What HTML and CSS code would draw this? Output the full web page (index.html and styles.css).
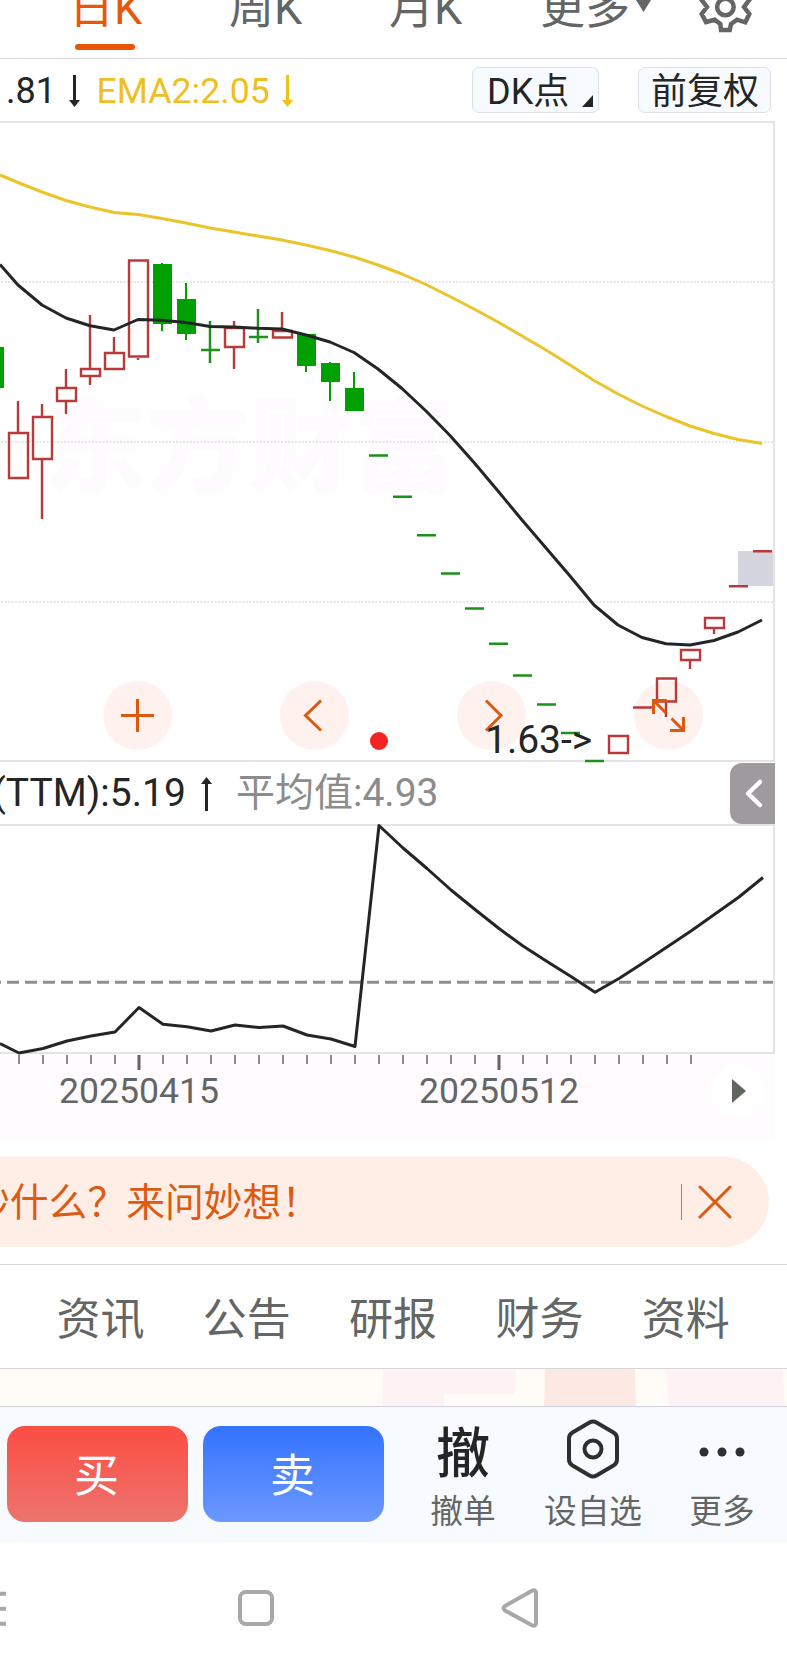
FILE: index.html
```html
<!DOCTYPE html>
<html lang="zh-CN">
<head>
<meta charset="utf-8">
<title>日K</title>
<link rel="stylesheet" href="styles.css">
</head>
<body>
<div class="screen">
  <nav class="period-tabs">
    <span class="period active">日K</span>
    <span class="period">周K</span>
    <span class="period">月K</span>
    <span class="period more">更多<svg class="caret" viewBox="0 0 15 12"><path d="M0 0H15L7.500 12Z"/></svg></span>
    <svg class="gear" viewBox="697 -22 57 58"><path d="M707 7L701.700 14L706 22L714.700 19.700L720.300 24L721 30H729.700L731 24L737 19.700L745.300 22.300L749.300 14L744 7L749.300 0L745.300 -8L737 -5.700L731 -10L729.700 -16H721L720.300 -10L714.700 -5.700L706 -8L701.700 0Z"/><circle cx="725.400" cy="7" r="8.300"/></svg>
  </nav>

  <div class="indicator main-indicator">
    <span class="dark">.81</span>
    <svg class="arrow down" viewBox="0 0 11 32"><path d="M4 0H7V25H11L5.500 32L0 25H4Z"/></svg>
    <span class="yellow">EMA2:2.05</span>
    <svg class="arrow down yellow" viewBox="0 0 11 32"><path d="M4 0H7V25H11L5.500 32L0 25H4Z"/></svg>
    <button class="chip dk">DK点<svg class="corner" viewBox="0 0 11 12"><path d="M11 0V12H0Z"/></svg></button>
    <button class="chip adjust">前复权</button>
  </div>

  <svg class="chart kline" viewBox="0 121 787 642">
    <text class="watermark" x="43" y="484">东方财富</text>
    <g class="frame"><path d="M0 122H774V761H0"/></g>
    <g class="grid"><path d="M1 282H773M1 442H773M1 602H773"/></g>
    <rect class="gap" x="738" y="551" width="35" height="35"/>
    <g class="bubble">
      <circle cx="137.500" cy="715.500" r="34.500"/><circle cx="314.500" cy="715.500" r="34.500"/>
      <circle cx="491.500" cy="715.500" r="34.500"/><circle cx="668.500" cy="715.500" r="34.500"/>
    </g>
    <g class="down-candle">
      <rect x="-15" y="347" width="19" height="41"/>
      <rect x="153" y="264" width="19" height="60"/><rect x="161" y="263" width="2" height="68"/>
      <rect x="177" y="299" width="19" height="35"/><rect x="185" y="283" width="2" height="57"/>
      <rect x="297" y="334" width="19" height="32"/><rect x="305" y="334" width="2" height="38"/>
      <rect x="321" y="363" width="19" height="19"/><rect x="329" y="362" width="2" height="39"/>
      <rect x="345" y="388" width="19" height="23"/><rect x="353" y="372" width="2" height="39"/>
    </g>
    <g class="down-flat">
      <path d="M201 350H220M210 321V363M249 337H268M258 309V343"/>
      <path d="M369 455.500H388M393 496.700H412M417 535.300H436M441 573.500H460M465 608.500H484M489 643.700H508M513 675.500H532M537 704.500H556M561 733H580M585 761H604"/>
    </g>
    <g class="up-candle">
      <path d="M18 401V432M9 433H28V478H9Z"/>
      <path d="M42 404V416M42 460V519M33 417H52V459H33Z"/>
      <path d="M66 369V387M66 402V414M57 388H76V401H57Z"/>
      <path d="M90 315V368M90 377V385M81 369H100V376H81Z"/>
      <path d="M114 337V352M105 353H124V369H105Z"/>
      <path d="M138 358V360M129 260.500H148V356.500H129Z"/>
      <path d="M234 321V327M234 348V369M225 328H244V347H225Z"/>
      <path d="M282 312V329M273 331H292V337.500H273Z"/>
      <path d="M609 736H628V753H609ZM633 707.500H652"/>
      <path d="M657 678.500H676V701.500H657ZM666 702V717"/>
      <path d="M681 650H700V660H681ZM690 661V669"/>
      <path d="M705 618H724V628H705ZM714 629V634"/>
      <path d="M729 586.300H748M753 551.300H772"/>
    </g>
    <polyline class="ema slow" points="0,175 18,182.500 42,192 66,200.500 90,207 114,212.500 138,214.500 162,218.500 186,223 210,228 234,232 258,236 282,240 306,245 330,250.500 354,257 378,265 402,274 426,284.500 450,296.500 474,309 498,322 522,336 546,350 570,365 594,380.500 618,394 642,406 666,416.500 690,426 714,433.500 738,439.500 762,443.500"/>
    <polyline class="ema fast" points="0,264.500 18,285 42,305 66,318 90,325.700 114,330 138,319.500 162,320.300 186,322.500 210,326.500 234,327 258,328.300 282,329 306,335 330,342 354,352.500 378,369 402,388.500 426,411 450,435.500 474,462.500 498,491 522,520 546,548 570,576 594,605 618,625 642,637.500 666,643.700 690,645 714,640.500 738,632 762,620"/>
    <g class="bubble-icon">
      <path d="M121 715.500H154M137.500 699V732"/>
      <path d="M321 700.500L305.500 715.500L321 730.500M486 700.500L501 715.500L486 730.500"/>
      <path d="M667 700.500H653.500V714M654 701L666 713M670 730.500H683.500V717M683 730L671.500 718.500"/>
    </g>
    <circle class="marker" cx="379" cy="741" r="9"/>
    <text class="low-label" x="485" y="753">1.63-&gt;</text>
  </svg>

  <div class="indicator sub-indicator">
    <span class="dark">(TTM):5.19</span>
    <svg class="arrow up" viewBox="0 0 11 34"><path d="M4 34H7V7H11L5.500 0L0 7H4Z"/></svg>
    <span class="gray">平均值:4.93</span>
    <button class="drawer"><svg viewBox="0 0 45 61"><path d="M30 19L18 30.500L30 42"/></svg></button>
  </div>

  <svg class="chart valuation" viewBox="0 824 787 231">
    <g class="frame"><path d="M0 825H774V1053H0"/></g>
    <path class="average" d="M-11 982.300H773"/>
    <polyline class="ema fast" points="0,1043.500 19,1053 43,1048.500 67,1041 91,1036 115,1032 139,1007.500 163,1024.300 187,1026.700 211,1031 235,1025 259,1027.500 283,1026 307,1035 331,1039 355,1046.500 379,825.500 403,848 427,868.500 451,890 475,909.500 499,928.500 523,946 547,961.500 571,976.500 595,992.300 619,978.500 643,963 667,947 691,931 715,914 739,897 763,877.500"/>
  </svg>

  <div class="axis">
    <svg class="ticks" viewBox="0 1055 775 16">
      <path class="minor" d="M19 1055v9m24-9v9m24-9v9m24-9v9m24-9v9m48-9v9m24-9v9m24-9v9m24-9v9m24-9v9m24-9v9m24-9v9m24-9v9m24-9v9m24-9v9m24-9v9m24-9v9m24-9v9m24-9v9m48-9v9m24-9v9m24-9v9m24-9v9m24-9v9m24-9v9m24-9v9m24-9v9"/>
      <path class="major" d="M139 1055V1070M499 1055V1070"/>
    </svg>
    <div class="dates"><span>20250415</span><span>20250512</span></div>
    <button class="play"><svg viewBox="0 0 14 24"><path d="M0 0L14 12L0 24Z"/></svg></button>
  </div>

  <div class="banner">
    <span class="ask">妙什么？来问妙想！</span>
    <span class="rule"></span>
    <svg class="close" viewBox="0 0 34 34"><path d="M2 2L32 32M32 2L2 32"/></svg>
  </div>

  <nav class="sections"><span>资讯</span><span>公告</span><span>研报</span><span>财务</span><span>资料</span></nav>

  <svg class="promo" viewBox="0 0 787 37">
    <path class="pink" d="M383 0H516L514 25H444V37H382Z"/>
    <path class="peach" d="M545 0H635L636 37H544Z"/>
    <path class="pink" d="M666 0H783L785 37H669Z"/>
  </svg>

  <div class="trade-bar">
    <button class="trade buy">买</button>
    <button class="trade sell">卖</button>
    <div class="action cancel"><span class="glyph">撤</span><span class="label">撤单</span></div>
    <div class="action favorite">
      <svg class="icon" viewBox="0 0 60 62"><path d="M26.500 4.500Q30 2.500 33.500 4.500L50.500 14.500Q54 16.500 54 20.500V41.500Q54 45.500 50.500 47.500L33.500 57.500Q30 59.500 26.500 57.500L9.500 47.500Q6 45.500 6 41.500V20.500Q6 16.500 9.500 14.500Z"/><circle cx="30" cy="31" r="8.500"/></svg>
      <span class="label">设自选</span>
    </div>
    <div class="action overflow">
      <svg class="icon dots" viewBox="0 0 60 62"><circle cx="12" cy="34" r="4.500"/><circle cx="30" cy="34" r="4.500"/><circle cx="48" cy="34" r="4.500"/></svg>
      <span class="label">更多</span>
    </div>
  </div>

  <svg class="system-nav" viewBox="0 1542 787 131">
    <path d="M-10 1593.700H6M-10 1608.700H6M-10 1623.700H6"/>
    <rect x="240" y="1592" width="32" height="32" rx="6"/>
    <path d="M505 1606L531.500 1591Q536 1589 536 1593V1623Q536 1627 531.500 1625L505 1610.500Q502 1608.300 505 1606Z"/>
  </svg>
</div>
</body>
</html>
```
FILE: styles.css
```css
* { box-sizing: border-box; }
body { margin: 0; background: #fff; }
svg { display: block; flex: none; }
button { border: 0; padding: 0; margin: 0; font: inherit; color: inherit; }
.screen {
  width: 787px;
  height: 1674px;
  overflow: hidden;
  font-family: Roboto, "Noto Sans CJK SC", sans-serif;
  font-weight: 400;
  color: #242625;
  white-space: nowrap;
}

.period-tabs {
  display: flex;
  height: 59px;
  padding-left: 69px;
  border-bottom: 1px solid #d6d6d8;
  font-size: 45px;
  line-height: 50px;
  color: #646665;
}
.period { height: 66px; margin-top: -16px; width: 160px; flex: none; }
.period.active { color: #e8560a; }
.period.active::after {
  content: "";
  display: block;
  width: 60px;
  height: 6px;
  margin: 10px 0 0 6px;
  border-radius: 3px;
  background: #e8560a;
}
.period.more { display: flex; width: 157px; margin-left: -9px; }
.caret { width: 15px; height: 12px; margin: 16px 0 0 6px; fill: #646665; }
.gear { width: 57px; height: 58px; margin-top: -22px; fill: none; stroke: #646665; stroke-width: 4.5; }

.indicator { display: flex; align-items: center; height: 62px; }
.main-indicator { padding-left: 6px; font-size: 36px; line-height: 62px; }
.main-indicator span { padding-top: 1px; }
.main-indicator .dark { width: 63px; }
.arrow { width: 11px; fill: #242625; }
.arrow.down { height: 32px; margin-top: 2px; }
.arrow.up { height: 34px; }
.yellow { color: #eebf1e; fill: #f2c118; }
.main-indicator span.yellow { width: 185.500px; margin-left: 16.500px; font-size: 35.700px; }
.chip {
  display: flex;
  height: 46px;
  line-height: 46px;
  border: 1px solid #e0e0e8;
  border-radius: 7px;
  background: #f7faff;
}
.chip.dk { width: 127px; margin-left: 179px; padding: 1px 0 0 14px; }
.corner { width: 11px; height: 12px; margin: 26px 0 0 13px; fill: #242625; }
.chip.adjust { width: 133px; margin-left: 39px; padding: 1px 0 0 12px; }

.chart { width: 787px; }
.kline { height: 642px; }
.valuation { height: 231px; }
.watermark { font-family: "Noto Sans CJK SC", sans-serif; font-size: 103px; font-weight: 900; fill: #fefbff; }
.frame { fill: none; stroke: #e4e4e6; stroke-width: 2; }
.grid { stroke: #dedee0; stroke-width: 1.5; stroke-dasharray: 2 1.5; }
.gap { fill: #d4d5df; }
.bubble { fill: #fff2ee; }
.bubble-icon { fill: none; stroke: #dc5a10; stroke-width: 3; }
.down-candle { fill: #00a000; }
.down-flat { stroke: #1d901d; stroke-width: 2.5; }
.up-candle { fill: none; stroke: #b93a38; stroke-width: 2.4; }
.ema { fill: none; stroke-width: 3; stroke-linejoin: round; }
.ema.slow { stroke: #ebc42a; }
.ema.fast { stroke: #242625; }
.marker { fill: #f52323; }
.low-label { font-size: 39px; fill: #242625; }
.average { stroke: #8e8e8e; stroke-width: 3; stroke-dasharray: 12 6; }

.sub-indicator { height: 61px; font-size: 39px; line-height: 61px; }
.sub-indicator .dark { width: 203.500px; margin-left: -7.500px; }
.sub-indicator .gray { width: 499px; margin-left: 24px; color: #8c8c8c; }
.sub-indicator .arrow { margin-left: 5px; }
.sub-indicator .drawer { width: 45px; height: 61px; margin-left: -5px; border-radius: 12px 0 0 12px; background: #9e9a9e; }
.drawer svg { width: 45px; height: 61px; fill: none; stroke: #fff; stroke-width: 4.5; stroke-linecap: round; stroke-linejoin: round; }

.axis {
  display: grid;
  grid-template-columns: 711px 54px;
  grid-template-rows: 16px 68px;
  width: 775px;
  height: 84px;
  background: #fffbff;
}
.ticks { grid-column: 1 / 3; width: 775px; height: 16px; }
.minor { stroke: #8a8a8a; stroke-width: 2; }
.major { stroke: #646665; stroke-width: 3; }
.dates { display: flex; padding-left: 59px; font-size: 35.600px; line-height: 40px; color: #646665; }
.dates span { width: 360px; flex: none; }
.play { display: flex; align-items: center; width: 54px; height: 54px; margin-top: -7px; padding-left: 21px; border-radius: 50%; background: #fff; }
.play svg { width: 14px; height: 24px; fill: #616661; }

.banner {
  display: flex;
  align-items: center;
  width: 769px;
  height: 90px;
  margin-top: 18px;
  border-radius: 0 45px 45px 0;
  background: #ffeee6;
  color: #dc5a12;
  font-size: 38.800px;
}
.ask { width: 710px; margin-left: -29px; padding-top: 1px; line-height: 90px; flex: none; }
.rule { width: 1px; height: 36px; flex: none; background: #c27a50; }
.close { width: 34px; height: 34px; margin-left: 16px; fill: none; stroke: #dc5a12; stroke-width: 3; stroke-linecap: round; }

.sections {
  display: flex;
  height: 105px;
  margin-top: 17px;
  padding: 3px 0 0 56.500px;
  border-top: 1px solid #d6d6da;
  border-bottom: 1px solid #d6d6da;
  font-size: 44px;
  line-height: 105px;
  color: #646665;
}
.sections span { width: 146.300px; flex: none; }

.promo { width: 787px; height: 37px; background: #fffcf7; }
.pink { fill: #fff2f5; }
.peach { fill: #fde9e4; }

.trade-bar {
  display: flex;
  height: 136px;
  padding: 19px 0 0 7px;
  border-top: 1px solid #cfd2dc;
  background: #f7faff;
}
.trade { width: 181px; height: 96px; margin-right: 15px; padding: 6px 2px 0 0; border-radius: 18px; color: #fff; font-size: 45px; line-height: 90px; }
.buy { background: linear-gradient(#fa5046 10%, #ec746e); }
.sell { background: linear-gradient(#3675ff 5%, #6c98ff); }
.action { display: flex; flex-direction: column; align-items: center; margin-top: -8px; }
.cancel { width: 100px; margin-left: 14px; }
.favorite { width: 120px; margin-left: 20px; }
.overflow { width: 100px; margin-left: 19px; }
.glyph { height: 62px; font-size: 54px; font-weight: 500; line-height: 73px; }
.icon { width: 60px; height: 62px; fill: none; stroke: #2e302f; stroke-width: 4; }
.dots { fill: #2e302f; stroke: none; }
.label { font-size: 32.700px; line-height: 40px; margin-top: 12px; color: #646665; }

.system-nav { width: 787px; height: 131px; fill: none; stroke: #a8a8a8; stroke-width: 4; }
```
